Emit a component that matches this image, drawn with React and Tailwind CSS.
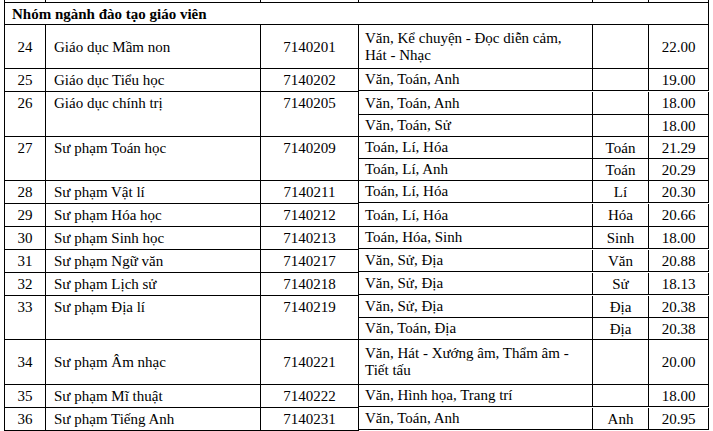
import React from 'react';

// hàng: [stt, ngành, mã, [[tổ hợp, môn chính, điểm], ...], cao từng dòng]
const ROWS = [
  { no: '24', name: 'Giáo dục Mầm non', code: '7140201', subs: [['Văn, Kể chuyện - Đọc diễn cảm,|Hát - Nhạc', '', '22.00']], h: ['h-[44px]'] },
  { no: '25', name: 'Giáo dục Tiểu học', code: '7140202', subs: [['Văn, Toán, Anh', '', '19.00']], h: ['h-[22px]'] },
  { no: '26', name: 'Giáo dục chính trị', code: '7140205', subs: [['Văn, Toán, Anh', '', '18.00'], ['Văn, Toán, Sử', '', '18.00']], h: ['h-[23px]', 'h-[22px]'] },
  { no: '27', name: 'Sư phạm Toán học', code: '7140209', subs: [['Toán, Lí, Hóa', 'Toán', '21.29'], ['Toán, Lí, Anh', 'Toán', '20.29']], h: ['h-[22px]', 'h-[22px]'] },
  { no: '28', name: 'Sư phạm Vật lí', code: '7140211', subs: [['Toán, Lí, Hóa', 'Lí', '20.30']], h: ['h-[22px]'] },
  { no: '29', name: 'Sư phạm Hóa học', code: '7140212', subs: [['Toán, Lí, Hóa', 'Hóa', '20.66']], h: ['h-[23px]'] },
  { no: '30', name: 'Sư phạm Sinh học', code: '7140213', subs: [['Toán, Hóa, Sinh', 'Sinh', '18.00']], h: ['h-[22px]'] },
  { no: '31', name: 'Sư phạm Ngữ văn', code: '7140217', subs: [['Văn, Sử, Địa', 'Văn', '20.88']], h: ['h-[22px]'] },
  { no: '32', name: 'Sư phạm Lịch sử', code: '7140218', subs: [['Văn, Sử, Địa', 'Sử', '18.13']], h: ['h-[22px]'] },
  { no: '33', name: 'Sư phạm Địa lí', code: '7140219', subs: [['Văn, Sử, Địa', 'Địa', '20.38'], ['Văn, Toán, Địa', 'Địa', '20.38']], h: ['h-[22px]', 'h-[22px]'] },
  { no: '34', name: 'Sư phạm Âm nhạc', code: '7140221', subs: [['Văn, Hát - Xướng âm, Thẩm âm -|Tiết tấu', '', '20.00']], h: ['h-[45px]'] },
  { no: '35', name: 'Sư phạm Mĩ thuật', code: '7140222', subs: [['Văn, Hình họa, Trang trí', '', '18.00']], h: ['h-[22px]'] },
  { no: '36', name: 'Sư phạm Tiếng Anh', code: '7140231', subs: [['Văn, Toán, Anh', 'Anh', '20.95']], h: ['h-[22px]'] },
];

const cell = 'border-r border-b border-black';

function Lines({ text }) {
  const parts = text.split('|');
  return (
    <span className="leading-[17px]">
      {parts.map((p, i) => (
        <React.Fragment key={i}>
          {i > 0 && <br />}
          {p}
        </React.Fragment>
      ))}
    </span>
  );
}

function Group({ row }) {
  const multi = row.subs.length > 1;
  // ô gộp dòng: chữ nằm trên cùng, canh theo dòng con đầu tiên
  const top = multi ? 'items-start leading-[22px]' : 'items-center';
  return (
    <div className="flex">
      <div className={`${cell} w-[41px] flex justify-center ${top}`}>{row.no}</div>
      <div className={`${cell} w-[215px] flex pl-[8px] ${top}`}>{row.name}</div>
      <div className={`${cell} w-[98px] flex justify-center ${top}`}>{row.code}</div>
      <div className="flex flex-col">
        {row.subs.map((s, i) => (
          <div key={i} className={`flex ${row.h[i]}`}>
            <div className={`${cell} w-[234px] flex items-center pl-[6px]`}>
              <Lines text={s[0]} />
            </div>
            <div className={`${cell} w-[56px] flex items-center justify-center`}>{s[1]}</div>
            <div className={`${cell} w-[60px] flex items-center justify-center`}>{s[2]}</div>
          </div>
        ))}
      </div>
    </div>
  );
}

export default function App() {
  return (
    <div className="w-[713px] h-[431px] bg-white text-black overflow-hidden [font-family:'Liberation_Serif','Times_New_Roman',serif] text-[15px] leading-[22px]">
      <div className="ml-[4px] w-[705px] border-l border-black">
        {/* phần đuôi của hàng phía trên bị cắt */}
        <div className="flex h-[3px]">
          {['w-[41px]', 'w-[215px]', 'w-[98px]', 'w-[234px]', 'w-[56px]', 'w-[60px]'].map((w) => (
            <div key={w} className={`${cell} ${w}`} />
          ))}
        </div>
        <div className={`${cell} h-[22px] flex items-center pl-[7px] font-bold`}>
          Nhóm ngành đào tạo giáo viên
        </div>
        {ROWS.map((r) => (
          <Group key={r.no} row={r} />
        ))}
      </div>
      <div className="ml-[706px] mt-[3px] w-[6px] h-[6px] border border-gray-400" />
    </div>
  );
}
